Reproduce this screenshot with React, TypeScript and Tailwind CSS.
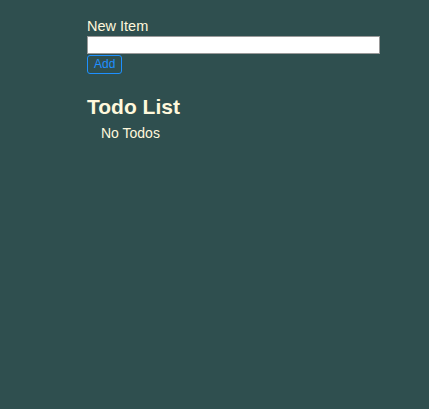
export default function App() {
  return (
    <div
      className="min-h-[409px] w-full bg-[#2f4f4f] text-[#fff8dc]"
      style={{ fontFamily: '"Liberation Sans", Arial, sans-serif' }}
    >
      <div className="ml-[87px] w-[293px] pt-[17px]">
        <label className="block text-[14.5px] leading-[18px]">New Item</label>
        <input
          type="text"
          className="mt-[1px] block h-[18px] w-[293px] border border-[#999] bg-white text-black outline-none"
        />
        <button className="mt-[1px] block rounded-[3px] border border-[#1e90ff] px-[6px] py-[1px] text-[12px] leading-[15px] text-[#1e90ff]">
          Add
        </button>
        <h2 className="mt-[20px] text-[21px] font-bold leading-[25px]">Todo List</h2>
        <ul className="mt-[6px]">
          <li className="pl-[14px] text-[14px] leading-[17px]">No Todos</li>
        </ul>
      </div>
    </div>
  );
}
